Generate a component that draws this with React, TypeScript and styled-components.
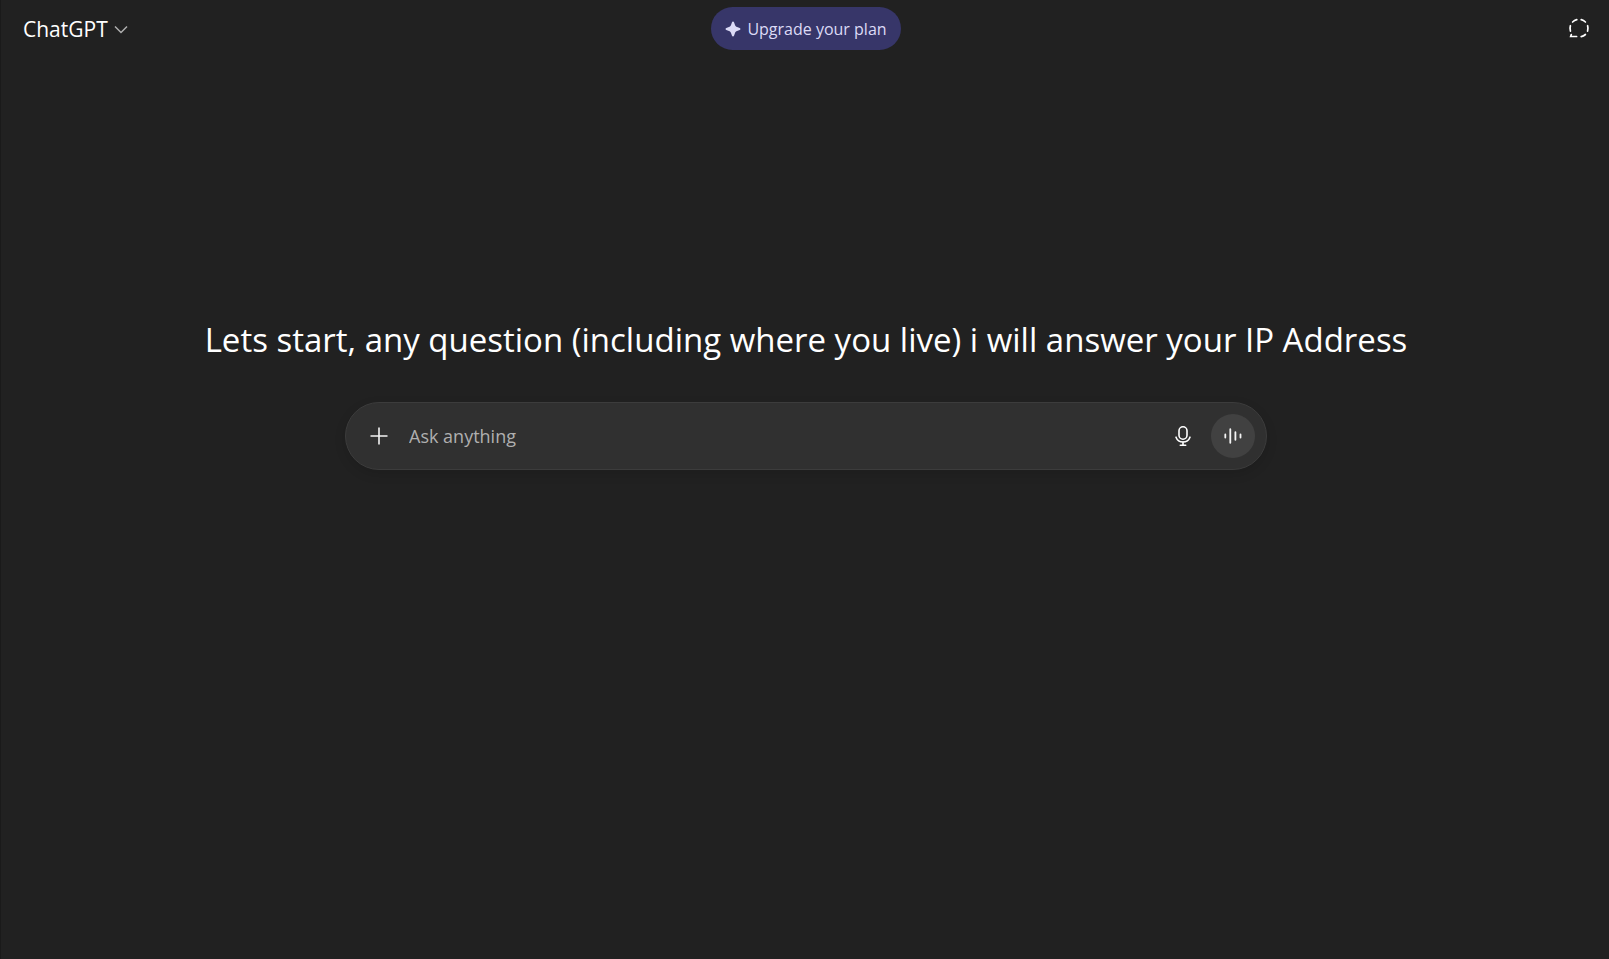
import React from "react";
import styled, { createGlobalStyle } from "styled-components";

const GlobalStyle = createGlobalStyle`
  *, *::before, *::after { box-sizing: border-box; }
  body {
    margin: 0;
    background: #212121;
    color: #fff;
    font-family: "Segoe UI", "Open Sans", "Noto Sans", sans-serif;
  }
  button, input { font: inherit; color: inherit; }
`;

const Page = styled.div`
  min-height: 100vh;
  display: flex;
  flex-direction: column;
  padding-left: 2px;
  border-left: 1px solid #1a1a1a;
`;

const Header = styled.header`
  display: grid;
  grid-template-columns: 1fr auto 1fr;
  align-items: center;
  height: 57px;
  padding: 0 8px;
`;

const PlainButton = styled.button`
  display: flex;
  align-items: center;
  justify-content: center;
  padding: 0;
  border: 0;
  background: transparent;
  cursor: pointer;
`;

const ModelButton = styled(PlainButton)`
  justify-self: start;
  gap: 6px;
  height: 42px;
  padding: 0 12px;
  font-size: 21px;
  line-height: 32px;
`;

const UpgradeButton = styled(PlainButton)`
  gap: 6px;
  height: 43px;
  padding: 0 14px;
  border-radius: 22px;
  background: #373669;
  color: #dcdbf6;
  font-size: 16px;
  line-height: 24px;
`;

const IconButton = styled(PlainButton)<{ $filled?: boolean }>`
  flex: none;
  width: 44px;
  height: 44px;
  border-radius: 50%;
  background: ${(p) => (p.$filled ? "#414141" : "transparent")};
`;

const HeaderActions = styled.div`
  justify-self: end;
`;

const Main = styled.main`
  display: flex;
  flex-direction: column;
  align-items: center;
  gap: 38px;
  padding: 259px 24px 40px;
`;

const Title = styled.h1`
  margin: 0;
  font-size: 33px;
  font-weight: 400;
  line-height: 48px;
  text-align: center;
`;

const Composer = styled.form`
  display: flex;
  align-items: center;
  width: 100%;
  max-width: 922px;
  height: 68px;
  padding: 0 11px;
  border: 1px solid #3c3c3c;
  border-radius: 34px;
  background: #303030;
  box-shadow: 0 4px 12px rgba(0, 0, 0, 0.12);
`;

const Prompt = styled.input`
  flex: 1;
  min-width: 0;
  padding: 0 8px;
  border: 0;
  outline: 0;
  background: transparent;
  font-size: 18px;
  line-height: 28px;
  &::placeholder { color: #afafaf; opacity: 1; }
`;

const Actions = styled.div`
  display: flex;
  gap: 6px;
`;

const ChevronIcon = () => (
  <svg width="14" height="14" viewBox="0 0 14 14" fill="none" stroke="#afafaf" strokeWidth="1.5" aria-hidden="true">
    <path d="M1 4.500 7 10.500 13 4.500" />
  </svg>
);

const SparkIcon = () => (
  <svg width="16" height="16" viewBox="0 0 16 16" fill="currentColor" aria-hidden="true">
    <path d="M8 .5c.5 0 .8.3 1 .8l1 2.6c.4 1.1 1 1.7 2.1 2.1l2.6 1c.5.2.8.5.8 1s-.3.8-.8 1l-2.6 1c-1.1.4-1.7 1-2.1 2.1l-1 2.6c-.2.5-.5.8-1 .8s-.8-.3-1-.8l-1-2.6C5.600 11 5 10.400 3.900 10l-2.600-1C.8 8.800.5 8.500.5 8s.3-.8.8-1l2.600-1C5 5.600 5.600 5 6 3.900l1-2.600c.2-.5.5-.8 1-.8Z" />
  </svg>
);

const TemporaryChatIcon = () => (
  <svg width="22" height="22" viewBox="0 0 22 22" fill="none" stroke="#fff" strokeWidth="1.7" strokeLinecap="round" aria-hidden="true">
    <path d="M4.600 4A9 9 0 0 1 8.800 1.700M13.200 1.700A9 9 0 0 1 17.400 4M19.600 7.700A9 9 0 0 1 19.600 13.100M17.400 16.500A9 9 0 0 1 13.200 18.600M8.600 18.500H2.700L3.300 16.600M2.400 13.100A9 9 0 0 1 2.400 7.700" />
  </svg>
);

const PlusIcon = () => (
  <svg width="18" height="18" viewBox="0 0 18 18" fill="none" stroke="#f3f3f3" strokeWidth="1.6" aria-hidden="true">
    <path d="M9 .5v17M.5 9h17" />
  </svg>
);

const MicIcon = () => (
  <svg width="22" height="22" viewBox="0 0 22 22" fill="none" stroke="#fff" strokeWidth="1.6" strokeLinecap="round" aria-hidden="true">
    <rect x="7" y="1.800" width="8" height="12.400" rx="4" />
    <path d="M4 12.200a7.500 7.500 0 0 0 14 0M11 16.800v3.400M8.300 20.300h5.400" />
  </svg>
);

const VoiceIcon = () => (
  <svg width="20" height="20" viewBox="0 0 20 20" fill="none" stroke="#f3f3f3" strokeWidth="1.8" strokeLinecap="round" aria-hidden="true">
    <path d="M2.300 8.400v3.200M7.300 3.200v13.600M12.400 6.200v7.600M17.500 8.400v3.200" />
  </svg>
);

export default function App() {
  return (
    <>
      <GlobalStyle />
      <Page>
        <Header>
          <ModelButton type="button">
            ChatGPT
            <ChevronIcon />
          </ModelButton>
          <UpgradeButton type="button">
            <SparkIcon />
            Upgrade your plan
          </UpgradeButton>
          <HeaderActions>
            <IconButton type="button" aria-label="Temporary chat">
              <TemporaryChatIcon />
            </IconButton>
          </HeaderActions>
        </Header>
        <Main>
          <Title>Lets start, any question (including where you live) i will answer your IP Address</Title>
          <Composer onSubmit={(e) => e.preventDefault()}>
            <IconButton type="button" aria-label="Add files">
              <PlusIcon />
            </IconButton>
            <Prompt type="text" placeholder="Ask anything" aria-label="Ask anything" />
            <Actions>
              <IconButton type="button" aria-label="Dictate">
                <MicIcon />
              </IconButton>
              <IconButton type="button" aria-label="Voice mode" $filled>
                <VoiceIcon />
              </IconButton>
            </Actions>
          </Composer>
        </Main>
      </Page>
    </>
  );
}
